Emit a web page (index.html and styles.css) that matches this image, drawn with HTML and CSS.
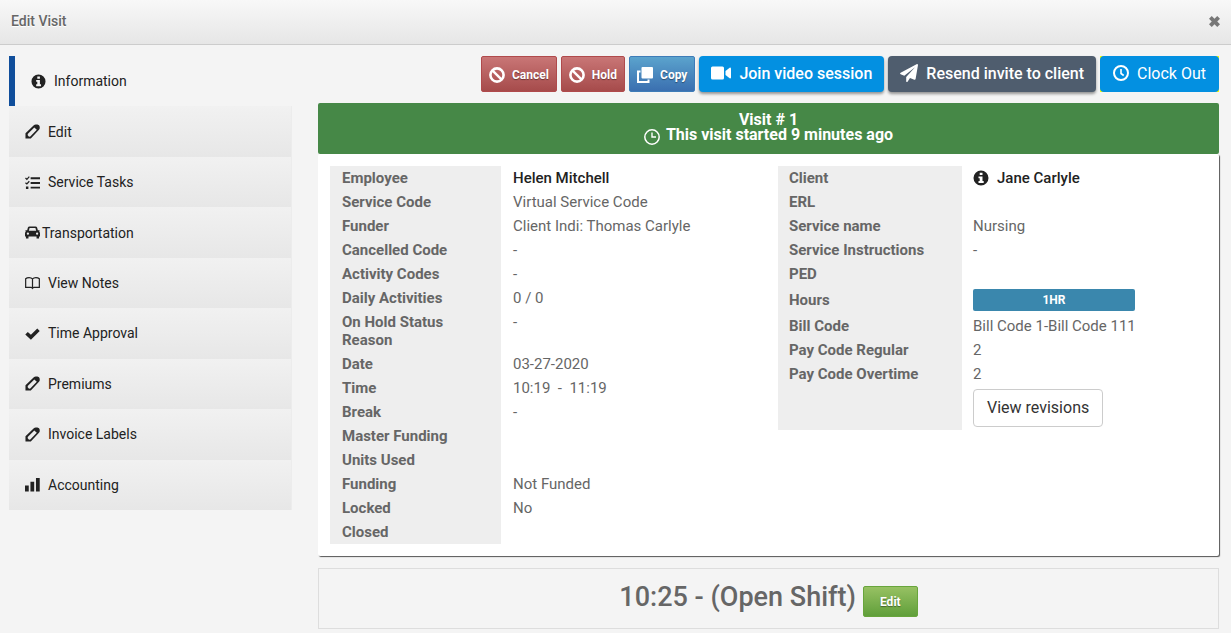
FILE: index.html
```html
<!DOCTYPE html>
<html lang="en">
<head>
  <meta charset="UTF-8" />
  <title>Edit Visit</title>
  <meta name="viewport" content="width=device-width, initial-scale=1.0" />
  <link rel="stylesheet" href="styles.css">
</head>
<body>

  <svg class="sprite" aria-hidden="true">
    <symbol id="i-info" viewBox="0 0 16 16">
      <path fill-rule="evenodd" d="M8 .5a7.500 7.500 0 1 0 0 15a7.500 7.500 0 0 0 0-15zM6.700 2.700h2.800v2.400h-2.800zM5.500 6.400h4v4.600h1.200v2h-5.200v-2h1.200v-2.700h-1.200z"/>
    </symbol>
    <symbol id="i-pencil" viewBox="0 0 16 16">
      <path fill-rule="evenodd" d="M.5 15.500V9.800L9.400 1.300Q10.200.5 11.500.5h1.800q2.200.4 2.400 2.500v1.500q-.1 1-.8 1.700L6.200 15.500zM2.900 10.600v1.500l1.400 1.500 1.300-.2L12.600 6.200 9.900 3.700z"/>
    </symbol>
    <symbol id="i-tasks" viewBox="0 0 16 16">
      <path d="M6 2.500h10v2H6zM6 7.500h10v2H6zM6 12.500h10v2H6zM1 12.200h2.600v2.600H1z"/>
      <path d="M.5 3.200l1.500 1.400L4.600 1.700M.5 8.200l1.500 1.400L4.600 6.700" fill="none" stroke="currentColor" stroke-width="1.300"/>
    </symbol>
    <symbol id="i-car" viewBox="0 0 16 16">
      <path fill-rule="evenodd" d="M4.800 1.500h6.400q1.300 0 1.700 1.200L13.700 5.500H15.500v1.300h-.6q1.100.7 1.100 2v3.400h-1V14.500h-2.700V12.200H3.700V14.500H1V12.200H0V8.800q0-1.300 1.100-2H.5V5.500H2.300L3.100 2.700q.4-1.200 1.700-1.200zM4.900 3.100L4.100 6.200h7.800l-.8-3.100zM3.100 8.100a1.200 1.200 0 1 0 0 2.400a1.200 1.200 0 0 0 0-2.400zM12.900 8.100a1.200 1.200 0 1 0 0 2.400a1.200 1.200 0 0 0 0-2.400z"/>
    </symbol>
    <symbol id="i-book" viewBox="0 0 16 16">
      <path d="M8 4.200Q6.700 2.700 4.400 2.700T.7 4v9.200h5.500q1.300 0 1.800.9.500-.9 1.800-.9h5.500V4q-1.400-1.300-3.700-1.300T8 4.200zV14" fill="none" stroke="currentColor" stroke-width="1.300"/>
    </symbol>
    <symbol id="i-check" viewBox="0 0 16 16">
      <path d="M.3 9l2.700-2.700 3.300 3.100 6.800-6.700 2.600 2.600-9.400 9.400z"/>
    </symbol>
    <symbol id="i-bars" viewBox="0 0 16 16">
      <path d="M0 9h4v6.500H0zM5.800 5h4v10.500h-4zM11.700 1h4v14.500h-4z"/>
    </symbol>
    <symbol id="i-ban" viewBox="0 0 16 16">
      <circle cx="8" cy="8" r="6.600" fill="none" stroke="currentColor" stroke-width="2.600"/>
      <path d="M3.600 3.600l8.800 8.800" stroke="currentColor" stroke-width="2.400"/>
    </symbol>
    <symbol id="i-copy" viewBox="0 0 16 16">
      <path d="M5.500 0h9.500q1 0 1 1v9.500q0 1-1 1H5.500q-1 0-1-1V1q0-1 1-1z"/>
      <path d="M3.500 4.500H1V15h10.500v-2.500" fill="none" stroke="currentColor" stroke-width="2"/>
    </symbol>
    <symbol id="i-video" viewBox="0 0 20 14">
      <rect width="13" height="13" y=".5" rx="1.500"/>
      <path d="M14.500 5L19 1.500q1 0 1 1v9q0 1-1 1L14.500 9z"/>
    </symbol>
    <symbol id="i-plane" viewBox="0 0 18 18">
      <path d="M17 0q1 0 1 1l-2.400 14q-.3 1.100-1.300.7L10 13.900l-2.300 3.500q-.8 1-1.500 0v-4.500L15 3.200 4.300 11.700.6 10.200q-1.100-.7 0-1.500z"/>
    </symbol>
    <symbol id="i-clock" viewBox="0 0 16 16">
      <circle cx="8" cy="8" r="7" fill="none" stroke="currentColor" stroke-width="2"/>
      <path d="M8 4v4.500l2.700 2" fill="none" stroke="currentColor" stroke-width="1.600"/>
    </symbol>
    <symbol id="i-time" viewBox="0 0 16 16">
      <circle cx="8" cy="8" r="7.200" fill="none" stroke="currentColor" stroke-width="1.500"/>
      <path d="M8 3.500V8h4" fill="none" stroke="currentColor" stroke-width="1.400"/>
    </symbol>
    <symbol id="i-close" viewBox="0 0 12 12">
      <path d="M3 0L6 3l3-3 3 3-3 3 3 3-3 3-3-3-3 3-3-3 3-3-3-3z"/>
    </symbol>
  </svg>

  <header class="title-bar">
    <h1>Edit Visit</h1>
    <button class="close" aria-label="Close"><svg class="icon"><use href="#i-close"/></svg></button>
  </header>

  <div class="layout">
    <nav class="side-nav">
      <a class="active" href="#information"><svg class="icon"><use href="#i-info"/></svg>Information</a>
      <a href="#edit"><svg class="icon"><use href="#i-pencil"/></svg>Edit</a>
      <a href="#tasks"><svg class="icon"><use href="#i-tasks"/></svg>Service Tasks</a>
      <a class="tight" href="#transportation"><svg class="icon"><use href="#i-car"/></svg>Transportation</a>
      <a href="#notes"><svg class="icon"><use href="#i-book"/></svg>View Notes</a>
      <a href="#approval"><svg class="icon"><use href="#i-check"/></svg>Time Approval</a>
      <a href="#premiums"><svg class="icon"><use href="#i-pencil"/></svg>Premiums</a>
      <a href="#labels"><svg class="icon"><use href="#i-pencil"/></svg>Invoice Labels</a>
      <a href="#accounting"><svg class="icon"><use href="#i-bars"/></svg>Accounting</a>
    </nav>

    <main class="content">
      <div class="toolbar">
        <button class="btn btn-red"><svg class="icon"><use href="#i-ban"/></svg>Cancel</button>
        <button class="btn btn-red"><svg class="icon"><use href="#i-ban"/></svg>Hold</button>
        <button class="btn btn-blue"><svg class="icon"><use href="#i-copy"/></svg>Copy</button>
        <button class="btn btn-lg btn-video"><svg class="icon icon-wide"><use href="#i-video"/></svg>Join video session</button>
        <button class="btn btn-lg btn-slate"><svg class="icon icon-plane"><use href="#i-plane"/></svg>Resend invite to client</button>
        <div class="clock-out">
          <button class="btn btn-lg btn-clock"><svg class="icon"><use href="#i-clock"/></svg>Clock Out</button>
        </div>
      </div>

      <div class="visit-banner">
        <div>Visit # 1</div>
        <div class="started"><svg class="icon"><use href="#i-time"/></svg>This visit started 9 minutes ago</div>
      </div>

      <section class="card">
        <table class="details details-left">
          <tr><th>Employee</th><td><strong>Helen Mitchell</strong></td></tr>
          <tr><th>Service Code</th><td>Virtual Service Code</td></tr>
          <tr><th>Funder</th><td>Client Indi: Thomas Carlyle</td></tr>
          <tr><th>Cancelled Code</th><td>-</td></tr>
          <tr><th>Activity Codes</th><td>-</td></tr>
          <tr><th>Daily Activities</th><td>0 / 0</td></tr>
          <tr><th>On Hold Status Reason</th><td>-</td></tr>
          <tr><th>Date</th><td>03-27-2020</td></tr>
          <tr><th>Time</th><td>10:19 &nbsp;-&nbsp; 11:19</td></tr>
          <tr><th>Break</th><td>-</td></tr>
          <tr><th>Master Funding</th><td></td></tr>
          <tr><th>Units Used</th><td></td></tr>
          <tr><th>Funding</th><td>Not Funded</td></tr>
          <tr><th>Locked</th><td>No</td></tr>
          <tr><th>Closed</th><td></td></tr>
        </table>

        <table class="details details-right">
          <tr><th>Client</th><td><strong class="client"><svg class="icon"><use href="#i-info"/></svg>Jane Carlyle</strong></td></tr>
          <tr><th>ERL</th><td></td></tr>
          <tr><th>Service name</th><td>Nursing</td></tr>
          <tr><th>Service Instructions</th><td>-</td></tr>
          <tr><th>PED</th><td></td></tr>
          <tr><th>Hours</th><td><span class="hours">1HR</span></td></tr>
          <tr><th>Bill Code</th><td>Bill Code 1-Bill Code 111</td></tr>
          <tr><th>Pay Code Regular</th><td>2</td></tr>
          <tr><th>Pay Code Overtime</th><td>2</td></tr>
          <tr><th></th><td><button class="revisions">View revisions</button></td></tr>
        </table>
      </section>

      <section class="shift">
        <h2>10:25 - (Open Shift)</h2>
        <button class="btn btn-green">Edit</button>
      </section>
    </main>
  </div>

</body>
</html>
```
FILE: styles.css
```css
:root {
  --page-bg: #f4f4f4;
  --text: #666;
  --dark: #222;
  --sky: #0390e1;
}
* {
  margin: 0;
  padding: 0;
  box-sizing: border-box;
}
body {
  background: var(--page-bg);
  color: var(--text);
  font-family: Roboto, "Liberation Sans", sans-serif;
  font-size: 15px;
  line-height: 18px;
}
button {
  font-family: inherit;
  cursor: pointer;
}
.sprite {
  display: none;
}
.icon {
  width: 16px;
  height: 16px;
  fill: currentColor;
  flex: none;
}
.title-bar {
  display: flex;
  justify-content: space-between;
  align-items: center;
  height: 45px;
  padding: 0 11px 2px;
  background: linear-gradient(#f8f8f8, #e6e6e6);
  border-bottom: 1px solid #ccc;
}
.title-bar h1 {
  font-size: 14px;
  font-weight: 500;
  line-height: 40px;
  text-shadow: 0 1px 0 #fff;
}
.close {
  display: flex;
  border: none;
  background: none;
  color: #777;
}
.close .icon {
  width: 11px;
  height: 11px;
}
.layout {
  display: flex;
  gap: 26px;
  padding: 11px 12px 4px 9px;
}

/* side menu */
.side-nav {
  display: grid;
  grid-auto-rows: 1fr;
  align-self: flex-start;
  width: 283px;
  min-height: 454px;
  flex: none;
}
.side-nav a {
  display: flex;
  align-items: center;
  gap: 8px;
  padding: 0 16px;
  font-size: 14px;
  color: var(--dark);
  text-decoration: none;
  background: linear-gradient(#f1f1f1, #e7e7e7);
  border-right: 1px solid #ececec;
}
.side-nav .icon {
  width: 15px;
  height: 15px;
}
.side-nav a.tight {
  gap: 2px;
}
.side-nav a.active {
  background: none;
  border-right: none;
  border-left: 6px solid #104e9b;
}

/* action buttons */
.content {
  flex: 1;
  min-width: 0;
}
.toolbar {
  display: flex;
  justify-content: flex-end;
  gap: 4px;
  margin-bottom: 11px;
}
.btn {
  display: flex;
  align-items: center;
  justify-content: center;
  gap: 7px;
  height: 36px;
  padding: 2px 7px 0;
  border: 1px solid;
  border-radius: 2px;
  color: #fff;
  font-size: 12px;
  font-weight: 700;
  text-shadow: 0 1px 1px rgba(0, 0, 0, 0.4);
}
.btn-red {
  background: linear-gradient(#c97676, #a64b4b);
  border-color: #b04a4c;
}
.btn-blue {
  background: linear-gradient(#5ba3cd, #3a6fb0);
  border-color: #3e7cb8;
}
.btn-green {
  height: 31px;
  padding: 0 16px;
  background: linear-gradient(#97c163, #609f3a);
  border-color: #68a53c;
}
.btn-lg {
  gap: 8px;
  padding: 0 12px 2px;
  border: none;
  border-radius: 4px;
  font-size: 16px;
  font-weight: 500;
  text-shadow: none;
}
.btn-video {
  background: var(--sky);
  box-shadow: 0 2px 3px rgba(0, 0, 0, 0.4);
}
.btn-slate {
  background: #4f5d6e;
  box-shadow: 0 2px 3px rgba(0, 0, 0, 0.4);
}
.btn-clock {
  padding: 0 13px 2px;
  background: var(--sky);
  font-weight: 400;
}
.clock-out {
  background: #ff0;
}
.icon-wide {
  width: 20px;
  height: 14px;
}
.icon-plane {
  width: 18px;
  height: 18px;
}

.visit-banner {
  padding: 9px 0 12px;
  border-radius: 2px;
  background: #468847;
  color: #fff;
  font-size: 16px;
  font-weight: 700;
  line-height: 15px;
  text-align: center;
}
.started {
  display: flex;
  justify-content: center;
  gap: 6px;
  height: 15px;
}
.started .icon {
  margin-top: 2px;
}

/* visit details */
.card {
  display: flex;
  align-items: flex-start;
  gap: 12px;
  padding: 12px;
  background: #fff;
  border-radius: 2px;
  box-shadow: 1px 1px 1px #555;
}
.details {
  border-collapse: collapse;
  table-layout: fixed;
}
.details-left {
  width: 436px;
}
.details-right {
  flex: 1;
}
.details th {
  width: 171px;
  padding: 3px 12px;
  background: #eee;
  font-weight: 700;
  text-align: left;
  vertical-align: top;
}
.details-right th {
  width: 184px;
  padding-left: 11px;
}
.details td {
  padding: 3px 12px;
  height: 24px;
  vertical-align: top;
}
.details-right td {
  padding-left: 11px;
}
.details tr:has(.hours) th {
  vertical-align: middle;
}
.details strong {
  color: var(--dark);
  font-weight: 500;
}
.client {
  display: flex;
  align-items: center;
  gap: 8px;
}
.hours {
  display: block;
  width: 162px;
  border-radius: 2px;
  background: #3a87ad;
  color: #fff;
  font-size: 12px;
  font-weight: 700;
  line-height: 22px;
  text-align: center;
}
.revisions {
  display: block;
  height: 38px;
  padding: 0 13px 2px;
  border: 1px solid #ccc;
  border-radius: 4px;
  background: #fff;
  color: #333;
  font-size: 16px;
}

.shift {
  display: flex;
  justify-content: center;
  align-items: flex-end;
  gap: 7px;
  margin-top: 12px;
  padding: 8px 0 11px;
  border: 1px solid #ddd;
}
.shift h2 {
  font-size: 27px;
  font-weight: 500;
  line-height: 40px;
}
```
